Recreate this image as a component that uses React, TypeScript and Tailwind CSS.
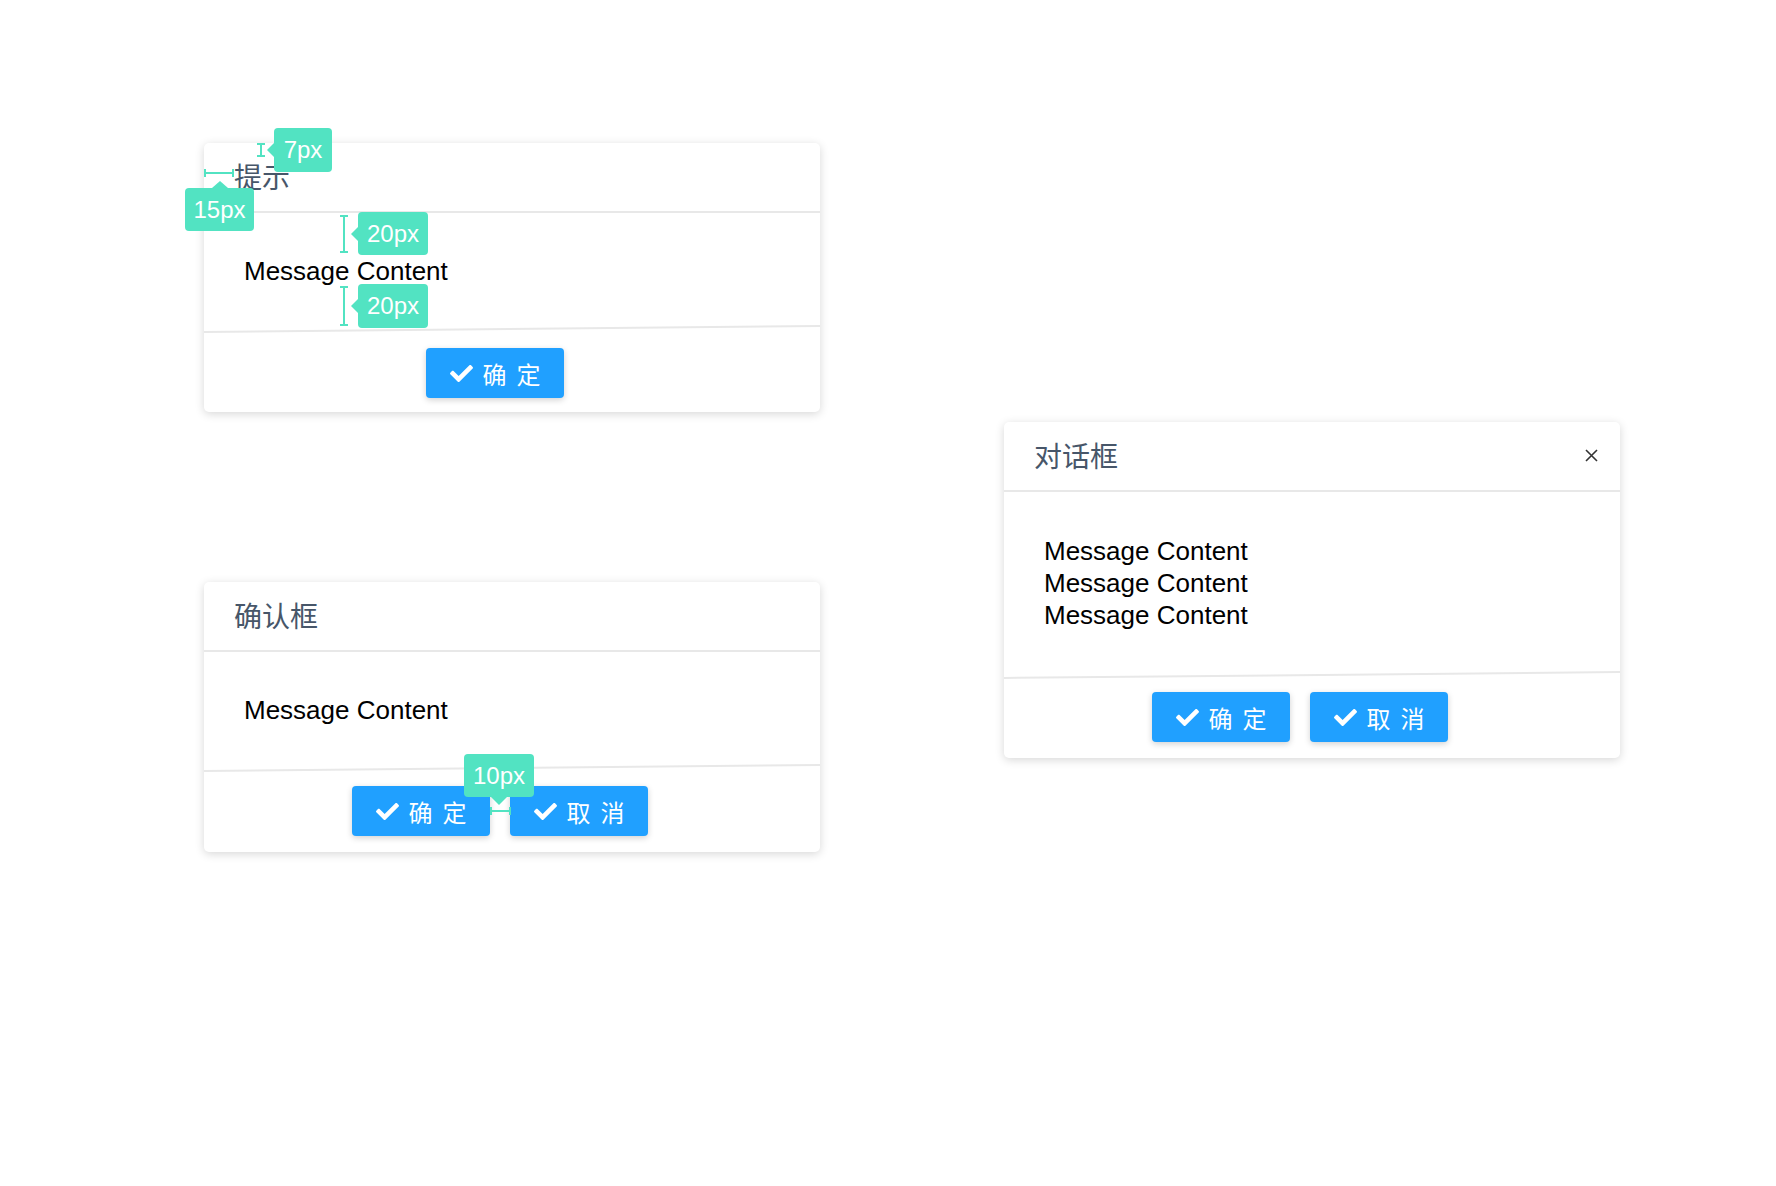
import { FaCheck } from "react-icons/fa";

const cjk = '"Noto Sans CJK SC", "Liberation Sans", sans-serif';
const latin = '"Liberation Sans", "Noto Sans CJK SC", sans-serif';

function Btn({ label }: { label: string[] }) {
  return (
    <button
      className="flex h-[50px] w-[138px] items-center justify-center gap-[10px] rounded-[4px] bg-[#20a0ff] pt-[2px] text-[24px] leading-none text-white shadow-[0_2px_6px_rgba(0,0,0,0.18)]"
      style={{ fontFamily: cjk }}
    >
      <FaCheck size={23} className="-mt-[2px]" />
      <span>{label[0]}</span>
      <span>{label[1]}</span>
    </button>
  );
}

// little green measure tag used for the spacing notes
function Tag({ text, arrow, className }: { text: string; arrow: "left" | "up" | "down"; className: string }) {
  return (
    <div
      className={`absolute z-10 flex items-center justify-center rounded-[4px] bg-[#52e3c2] text-[24px] text-white ${className}`}
      style={{ fontFamily: latin }}
    >
      {text}
      {arrow === "left" && (
        <div className="absolute top-1/2 left-[-7px] h-0 w-0 -translate-y-1/2 border-y-[7px] border-r-[7px] border-y-transparent border-r-[#52e3c2]" />
      )}
      {arrow === "up" && (
        <div className="absolute top-[-7px] left-1/2 h-0 w-0 -translate-x-1/2 border-x-[8px] border-b-[7px] border-x-transparent border-b-[#52e3c2]" />
      )}
      {arrow === "down" && (
        <div className="absolute bottom-[-8px] left-1/2 h-0 w-0 -translate-x-1/2 border-x-[8px] border-t-[8px] border-x-transparent border-t-[#52e3c2]" />
      )}
    </div>
  );
}

function VBar({ className }: { className: string }) {
  return (
    <div className={`absolute z-10 flex w-[8px] flex-col items-center justify-between ${className}`}>
      <div className="h-[2px] w-[8px] bg-[#52e3c2]" />
      <div className="w-[2px] flex-1 bg-[#52e3c2]" />
      <div className="h-[2px] w-[8px] bg-[#52e3c2]" />
    </div>
  );
}

function HBar({ className }: { className: string }) {
  return (
    <div className={`absolute z-10 flex h-[8px] items-center justify-between ${className}`}>
      <div className="h-[8px] w-[2px] bg-[#52e3c2]" />
      <div className="h-[2px] flex-1 bg-[#52e3c2]" />
      <div className="h-[8px] w-[2px] bg-[#52e3c2]" />
    </div>
  );
}

function Dialog({
  title,
  lines,
  buttons,
  closable,
  bodyPad,
  footPad,
  children,
}: {
  title: string;
  lines: string[];
  buttons: string[][];
  closable?: boolean;
  bodyPad: string;
  footPad: string;
  children?: React.ReactNode;
}) {
  return (
    <div className="relative w-[616px] rounded-[5px] bg-white shadow-[0_2px_10px_rgba(0,0,0,0.16)]">
      {/* header */}
      <div className="flex h-[70px] items-start justify-between border-b-2 border-[#e8e8e8] pt-[15px] pr-[22px] pl-[30px]">
        <span className="text-[28px] leading-[36px] text-[#475669]" style={{ fontFamily: cjk }}>
          {title}
        </span>
        {closable && (
          <svg width="13" height="13" viewBox="0 0 13 13" className="mt-[12px]">
            <path d="M1 1 L12 12 M12 1 L1 12" stroke="#333" strokeWidth="1.6" />
          </svg>
        )}
      </div>

      {/* body */}
      <div className={`px-[40px] text-[26px] leading-[32px] text-black ${bodyPad}`} style={{ fontFamily: latin }}>
        {lines.map((l, i) => (
          <div key={i}>{l}</div>
        ))}
      </div>

      {/* slightly tilted divider, as in the mock */}
      <div className="h-[2px] rotate-[-0.55deg] bg-[#e8e8e8]" />

      {/* footer */}
      <div className={`flex justify-center gap-[20px] ${footPad}`}>
        {buttons.map((b, i) => (
          <Btn key={i} label={b} />
        ))}
      </div>

      {children}
    </div>
  );
}

export default function App() {
  return (
    <div className="min-h-screen w-full bg-white">
      <div className="flex pt-[143px] pl-[204px]">
        <div className="flex flex-col gap-[170px]">
          <Dialog
            title="提示"
            lines={["Message Content"]}
            buttons={[["确", "定"]]}
            bodyPad="pt-[42px] pb-[41px]"
            footPad="pt-[18px] pb-[14px] pr-[34px]"
          >
            <HBar className="top-[26px] left-0 w-[30px]" />
            <Tag text="15px" arrow="up" className="top-[45px] left-[-19px] h-[43px] w-[69px]" />
            <VBar className="top-0 left-[53px] h-[14px]" />
            <Tag text="7px" arrow="left" className="top-[-15px] left-[70px] h-[44px] w-[58px]" />
            <VBar className="top-[72px] left-[136px] h-[38px]" />
            <Tag text="20px" arrow="left" className="top-[69px] left-[154px] h-[43px] w-[70px]" />
            <VBar className="top-[143px] left-[136px] h-[40px]" />
            <Tag text="20px" arrow="left" className="top-[141px] left-[154px] h-[44px] w-[70px]" />
          </Dialog>

          <Dialog
            title="确认框"
            lines={["Message Content"]}
            buttons={[
              ["确", "定"],
              ["取", "消"],
            ]}
            bodyPad="pt-[42px] pb-[41px]"
            footPad="pt-[17px] pb-[16px] pr-[24px]"
          >
            <HBar className="top-[225px] left-[286px] w-[21px]" />
            <Tag text="10px" arrow="down" className="top-[172px] left-[260px] h-[43px] w-[70px]" />
          </Dialog>
        </div>

        <div className="mt-[279px] ml-[184px]">
          <Dialog
            title="对话框"
            lines={["Message Content", "Message Content", "Message Content"]}
            buttons={[
              ["确", "定"],
              ["取", "消"],
            ]}
            closable
            bodyPad="pt-[43px] pb-[43px]"
            footPad="pt-[16px] pb-[16px] pr-[24px]"
          />
        </div>
      </div>
    </div>
  );
}
